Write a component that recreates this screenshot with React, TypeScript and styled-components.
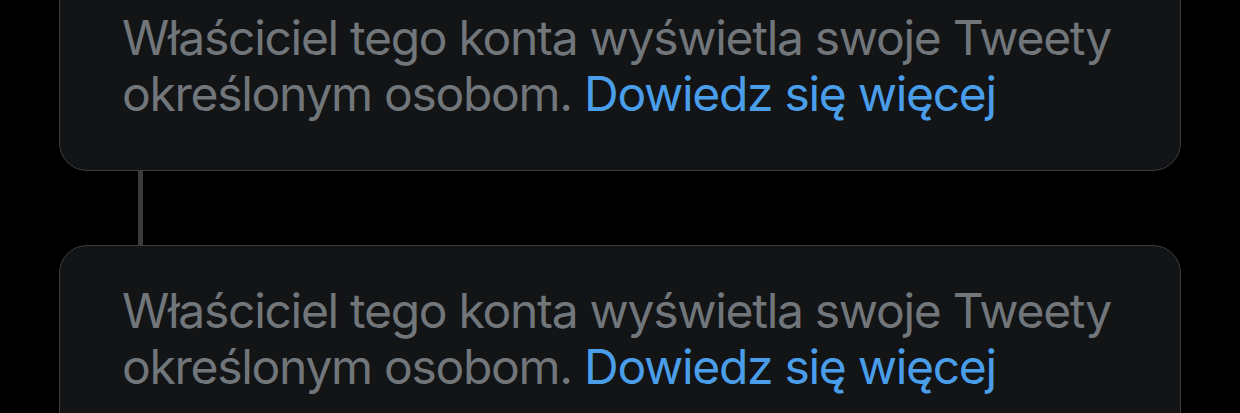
import React from "react";
import styled, { createGlobalStyle } from "styled-components";

const Global = createGlobalStyle`
  html, body { margin: 0; padding: 0; background: #000; }
  body { font-family: Inter, "Noto Sans", sans-serif; overflow: hidden; }
`;

const Page = styled.div`
  width: 1240px;
  height: 413px;
  overflow: hidden;
  background: #000;
  padding-left: 59px;
  box-sizing: border-box;
`;

const Thread = styled.div`
  width: 1122px;
  margin-top: -28px;
  display: flex;
  flex-direction: column;
`;

const Card = styled.div`
  box-sizing: border-box;
  height: 199px;
  background: #131416;
  border: 1px solid #3a3d40;
  border-radius: 28px;
  padding: 37px 0 0 62px;
`;

const Text = styled.p`
  margin: 0;
  font-size: 48px;
  line-height: 56px;
  color: #71767b;
  letter-spacing: -1.3px;
`;

const Link = styled.span`
  color: #4a9ee9;
`;

const Connector = styled.div`
  height: 74px;
  padding-left: 79px;
  display: flex;
`;

const Line = styled.div`
  width: 5px;
  background: #3a3b3d;
`;

const Notice = () => (
  <Card>
    <Text>
      Właściciel tego konta wyświetla swoje Tweety określonym osobom.{" "}
      <Link>Dowiedz się więcej</Link>
    </Text>
  </Card>
);

export default function App() {
  return (
    <>
      <Global />
      <Page>
        <Thread>
          <Notice />
          <Connector>
            <Line />
          </Connector>
          <Notice />
        </Thread>
      </Page>
    </>
  );
}
